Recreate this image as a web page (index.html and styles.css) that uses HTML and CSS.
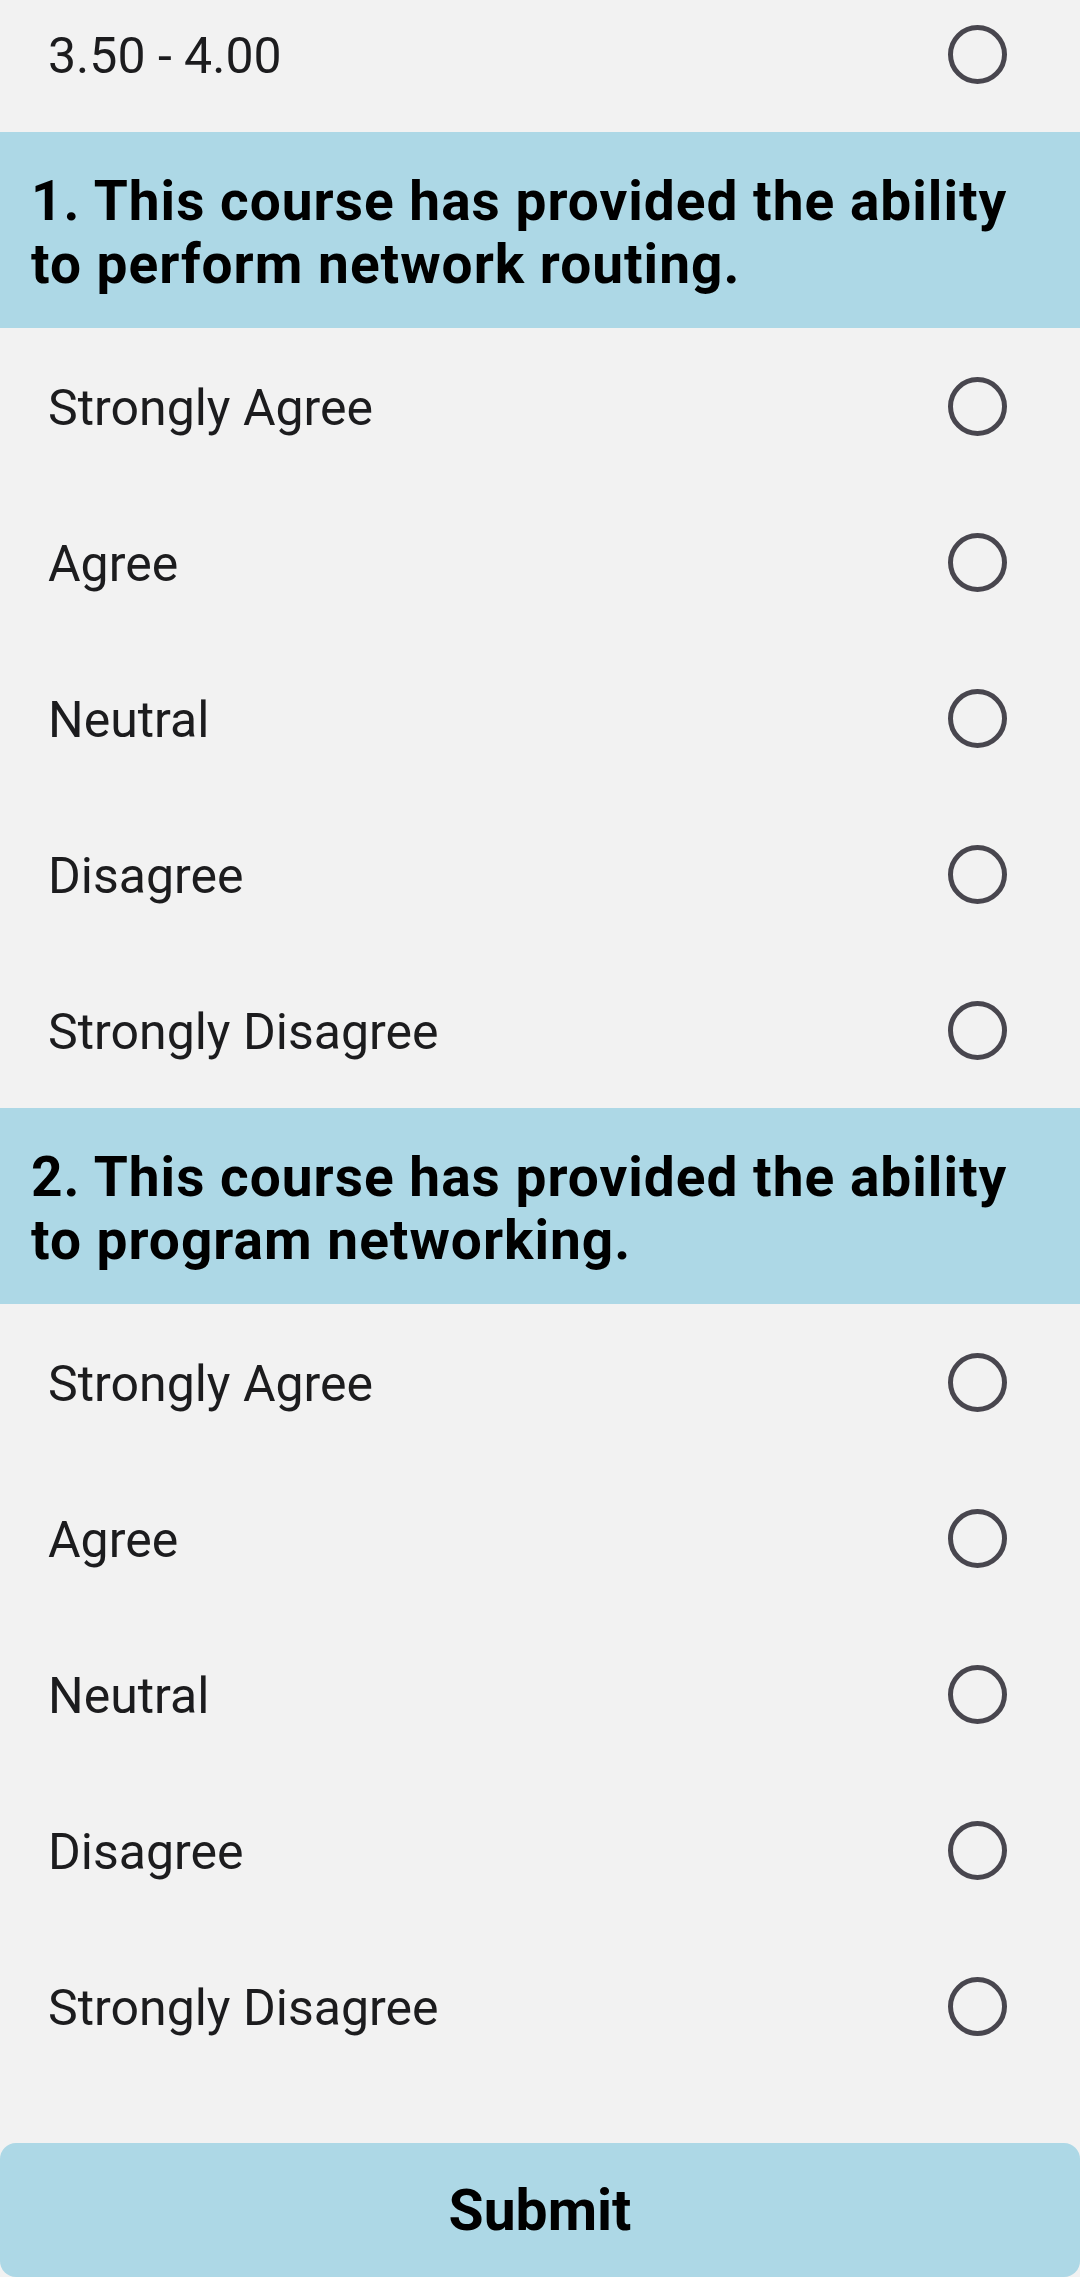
FILE: index.html
```html
<!DOCTYPE html>
<html>
<head>
<meta charset="utf-8">
<link rel="stylesheet" href="styles.css">
</head>
<body>
<div class="page">
  <div class="option first"><span class="label">3.50 - 4.00</span><span class="radio"></span></div>

  <div class="question">1. This course has provided the ability to perform network routing.</div>
  <div class="option"><span class="label">Strongly Agree</span><span class="radio"></span></div>
  <div class="option"><span class="label">Agree</span><span class="radio"></span></div>
  <div class="option"><span class="label">Neutral</span><span class="radio"></span></div>
  <div class="option"><span class="label">Disagree</span><span class="radio"></span></div>
  <div class="option"><span class="label">Strongly Disagree</span><span class="radio"></span></div>

  <div class="question">2. This course has provided the ability to program networking.</div>
  <div class="option"><span class="label">Strongly Agree</span><span class="radio"></span></div>
  <div class="option"><span class="label">Agree</span><span class="radio"></span></div>
  <div class="option"><span class="label">Neutral</span><span class="radio"></span></div>
  <div class="option"><span class="label">Disagree</span><span class="radio"></span></div>
  <div class="option"><span class="label">Strongly Disagree</span><span class="radio"></span></div>

  <button class="submit">Submit</button>
</div>
</body>
</html>
```
FILE: styles.css
```css
html, body {
  margin: 0;
  padding: 0;
  background: #f2f2f2;
}
body {
  width: 1080px;
  height: 2277px;
  overflow: hidden;
  font-family: Roboto, "Noto Sans", sans-serif;
}
.page {
  display: flex;
  flex-direction: column;
}
.option {
  height: 156px;
  display: flex;
  align-items: center;
  justify-content: space-between;
  padding: 4px 73px 0 48px;
  box-sizing: border-box;
}
.option.first {
  margin-top: -24px;
}
.label {
  font-size: 50px;
  color: #1c1c1e;
  font-weight: 400;
}
.radio {
  width: 59px;
  height: 59px;
  box-sizing: border-box;
  border: 5px solid #48464e;
  border-radius: 50%;
  margin-top: -4px;
}
.question {
  background: #add8e6;
  height: 196px;
  box-sizing: border-box;
  padding: 6px 60px 0 31px;
  display: flex;
  align-items: center;
  font-size: 55px;
  letter-spacing: 1px;
  line-height: 63px;
  font-weight: 700;
  color: #000;
}
.submit {
  margin-top: 59px;
  height: 134px;
  width: 1080px;
  border: none;
  border-radius: 16px;
  background: #add8e6;
  font-family: Roboto, "Noto Sans", sans-serif;
  font-size: 57px;
  font-weight: 700;
  color: #000;
  padding: 0;
}
```
